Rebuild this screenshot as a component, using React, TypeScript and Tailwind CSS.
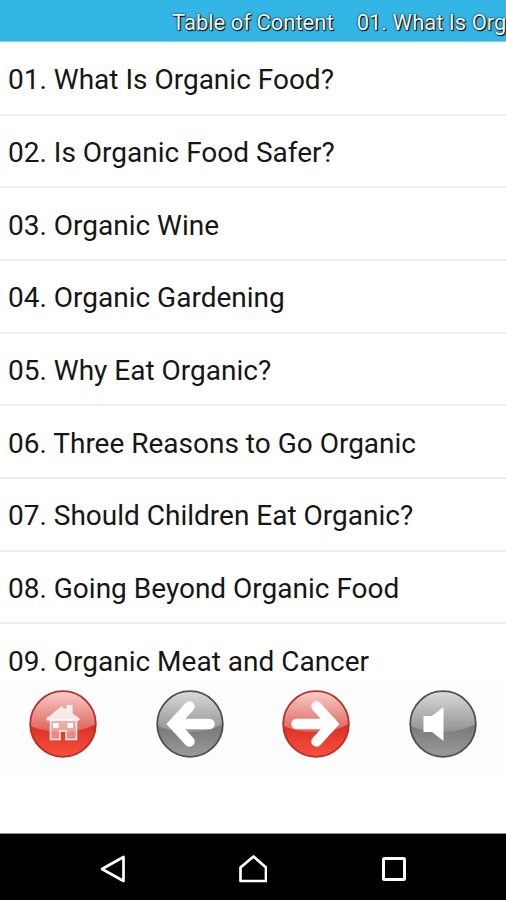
import type { ReactNode } from "react";

const chapters = [
  "01. What Is Organic Food?",
  "02. Is Organic Food Safer?",
  "03. Organic Wine",
  "04. Organic Gardening",
  "05. Why Eat Organic?",
  "06. Three Reasons to Go Organic",
  "07. Should Children Eat Organic?",
  "08. Going Beyond Organic Food",
  "09. Organic Meat and Cancer",
];

const tones = {
  red: { top: "#f7cfca", mid: "#e0605a", low: "#d62c20", bottom: "#f9503c", rim: "#b5302c" },
  gray: { top: "#dadada", mid: "#929292", low: "#747474", bottom: "#9a9a9a", rim: "#505050" },
};

interface RoundButtonProps {
  id: string;
  label: string;
  tone: keyof typeof tones;
  children: ReactNode;
}

function RoundButton({ id, label, tone, children }: RoundButtonProps) {
  const c = tones[tone];
  return (
    <button type="button" aria-label={label} className="h-[68px] w-[68px] rounded-full">
      <svg viewBox="0 0 68 68" className="h-full w-full" aria-hidden="true">
        <defs>
          <linearGradient id={`${id}-base`} x1="0" y1="0" x2="0" y2="1">
            <stop offset="0.45" stopColor={c.low} />
            <stop offset="1" stopColor={c.bottom} />
          </linearGradient>
          <linearGradient id={`${id}-gloss`} x1="0" y1="0" x2="0" y2="1">
            <stop offset="0" stopColor={c.top} />
            <stop offset="1" stopColor={c.mid} />
          </linearGradient>
        </defs>
        <circle cx="34" cy="34" r="33" fill={`url(#${id}-base)`} />
        <path d="M1 34a33 33 0 0 1 66 0Q52 42 34 42T1 36Z" fill={`url(#${id}-gloss)`} />
        <circle cx="34" cy="34" r="32.8" fill="none" stroke={c.rim} strokeWidth="1.8" />
        {children}
      </svg>
    </button>
  );
}

function Arrow() {
  return (
    <path
      d="M14.5 34H48M34.5 16.5L50.5 34L34.5 51.5"
      fill="none"
      stroke="#fff"
      strokeWidth="10.5"
      strokeLinecap="round"
      strokeLinejoin="miter"
    />
  );
}

export default function App() {
  return (
    <div className="flex h-screen flex-col overflow-hidden bg-white font-['Roboto',sans-serif] text-[#161616]">
      <header className="flex h-[42px] shrink-0 items-center gap-[23px] overflow-hidden border-b border-[#7fcdec] bg-[#33b5e5] pt-1 pl-[34%] text-[22px] leading-7 whitespace-nowrap text-[#f2f2f2]">
        <button type="button" className="[text-shadow:0_0_2px_#000,1px_1px_1px_#000]">
          Table of Content
        </button>
        <button type="button" className="[text-shadow:0_0_2px_#000,1px_1px_1px_#000]">
          {chapters[0]}
        </button>
      </header>

      <nav aria-label="Chapters" className="min-h-0 flex-1 overflow-hidden pt-px">
        <ul className="grid h-[654px] auto-rows-fr">
          {chapters.map((title) => (
            <li key={title} className="border-b-2 border-[#eeeeee]">
              <a href="#" className="flex h-full items-center px-2 pt-1 text-[28px] leading-8">
                {title}
              </a>
            </li>
          ))}
        </ul>
      </nav>

      <div className="h-[147px] shrink-0">
        <div className="grid grid-cols-4 justify-items-center bg-[#fdfdfd] pt-1 pb-3">
          <RoundButton id="home" label="Home" tone="red">
            <path
              d="M21.5 30H47.500V49.500H37V41H31V49.500H21.5Z"
              fill="#fff"
              fillOpacity="0.4"
              stroke="#fff"
              strokeOpacity="0.9"
              strokeWidth="1.5"
            />
            <path
              d="M18 30V28.500L32.500 17L38 20.500V15.500H43V23.500L50 28.500V30Z"
              fill="#fff"
              fillOpacity="0.8"
              stroke="#fff"
              strokeLinejoin="round"
            />
            <path d="M24 33H29.500V38H24ZM38.500 33H44V38H38.500Z" fill="#fff" />
          </RoundButton>
          <RoundButton id="prev" label="Previous" tone="gray">
            <g transform="translate(68 0) scale(-1 1)">
              <Arrow />
            </g>
          </RoundButton>
          <RoundButton id="next" label="Next" tone="red">
            <Arrow />
          </RoundButton>
          <RoundButton id="sound" label="Sound" tone="gray">
            <path d="M14.500 26H23L34.500 17V51L23 42H14.500Z" fill="#fff" />
          </RoundButton>
        </div>
      </div>

      <footer className="flex h-[67px] shrink-0 items-center justify-center gap-28 border-t border-[#8a8a8a] bg-black pt-1 text-white">
        <button type="button" aria-label="Back">
          <svg viewBox="0 0 28 28" className="h-7 w-7" fill="none" stroke="currentColor" strokeWidth="2.7">
            <path d="M24.500 2V26L3 14Z" strokeLinejoin="round" />
          </svg>
        </button>
        <button type="button" aria-label="Home screen">
          <svg viewBox="0 0 28 28" className="h-7 w-7" fill="none" stroke="currentColor" strokeWidth="2.7">
            <path d="M1.500 26V12.500L14.500 1.500L27 12.500V26Z" strokeLinejoin="round" />
          </svg>
        </button>
        <button type="button" aria-label="Recent apps">
          <svg viewBox="0 0 28 28" className="h-7 w-7" fill="none" stroke="currentColor" strokeWidth="3">
            <rect x="4.500" y="3.500" width="21" height="21" rx="1" />
          </svg>
        </button>
      </footer>
    </div>
  );
}
